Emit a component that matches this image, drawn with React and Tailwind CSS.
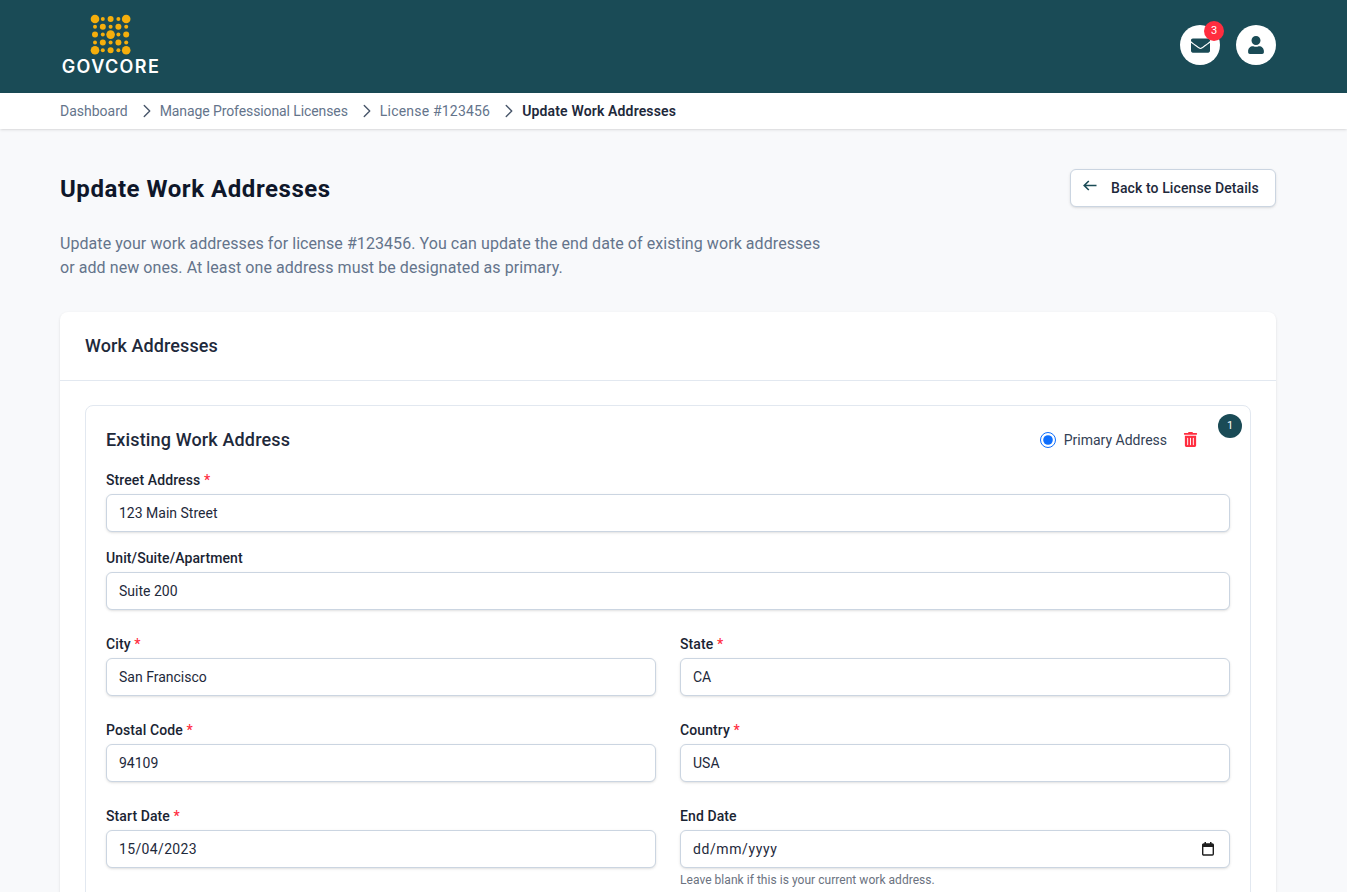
import React from 'react';
import { FaEnvelope, FaUser, FaTrashAlt } from 'react-icons/fa';
import { ChevronRight } from 'lucide-react';

const DOTS = [
  [4.3, 2, 3, 2, 4.3],
  [2, 3, 2, 3, 2],
  [3, 2, 4.3, 2, 3],
  [2, 3, 2, 3, 2],
  [4.3, 2, 3, 2, 4.3],
];

const Logo = () => (
  <div className="flex flex-col items-center w-[100px] mt-[1px]">
    <svg width="42" height="42" viewBox="0 0 42 42">
      {DOTS.map((row, r) =>
        row.map((rad, c) => (
          <circle key={`${r}-${c}`} cx={5 + c * 7.8} cy={5 + r * 7.8} r={rad} fill="#f5ae0c" />
        ))
      )}
    </svg>
    <span className="font-['Inter',sans-serif] text-white text-[18px] leading-[20px] font-semibold tracking-[1.4px] mt-[1px]">GOVCORE</span>
  </div>
);

const CalendarIcon = () => (
  <svg width="14" height="16" viewBox="0 0 14 16" className="absolute right-[15px] top-[11px] text-[#1e1e1e]">
    <rect x="1.7" y="3" width="10.6" height="11" rx="1" fill="none" stroke="currentColor" strokeWidth="1.4" />
    <rect x="1.7" y="3" width="10.6" height="3" fill="currentColor" />
    <rect x="3.5" y="1" width="1.5" height="2.5" fill="currentColor" />
    <rect x="9" y="1" width="1.5" height="2.5" fill="currentColor" />
  </svg>
);

const Field = ({ label, required, value, hint, icon, inputClass = '' }) => (
  <div>
    <label className="block text-sm leading-[21px] mb-[3px] font-medium tracking-[0.1px] text-[#1a2433]">
      {label}
      {required && <span className="text-[#ff2d3f]"> *</span>}
    </label>
    <div className="relative">
      <input
        type="text"
        defaultValue={value}
        className={`block w-full h-[38px] bg-white border border-[#cbd5e1] rounded-md px-3 text-sm text-[#1e293b] shadow-sm ${inputClass}`}
      />
      {icon}
    </div>
    {hint && <p className="text-xs leading-[16px] mt-[4px] tracking-[0.04px] text-[#6b7280]">{hint}</p>}
  </div>
);

const Crumb = ({ children }) => (
  <>
    <span>{children}</span>
    <ChevronRight size={22} strokeWidth={1.5} className="ml-[8px] mr-[2px] text-[#475569]" />
  </>
);

export default function App() {
  return (
    <div className="h-screen overflow-hidden bg-[#f8f9fb] font-['Roboto',sans-serif]">
      <header className="h-[93px] bg-[#1a4b56] flex items-center justify-between pl-[61px] pr-[71px] pb-[3px]">
        <Logo />
        <div className="flex items-center gap-4">
          <button className="relative w-10 h-10 rounded-full bg-white flex items-center justify-center text-[#1a4b56]">
            <FaEnvelope size={19} />
            <span className="absolute top-[-4px] right-[-4px] w-5 h-5 rounded-full bg-[#ff2d3f] text-white text-[11px] flex items-center justify-center">3</span>
          </button>
          <button className="w-10 h-10 rounded-full bg-white flex items-center justify-center text-[#1a4b56]">
            <FaUser size={18} />
          </button>
        </div>
      </header>

      <nav className="h-[36px] bg-white shadow-sm flex items-center px-[60px] text-sm text-[#64748b]">
        <Crumb>Dashboard</Crumb>
        <span className="flex items-center tracking-[-0.1px]">
          <Crumb>Manage Professional Licenses</Crumb>
        </span>
        <span className="flex items-center tracking-[0.2px]">
          <Crumb>License #123456</Crumb>
        </span>
        <span className="font-semibold tracking-[0.15px] text-[#1e293b]">Update Work Addresses</span>
      </nav>

      <main className="pl-[60px] pr-[71px] pt-10">
        <div className="flex items-start justify-between">
          <h1 className="text-2xl leading-[40px] font-bold tracking-[0.55px] text-[#0f172a]">Update Work Addresses</h1>
          <button className="h-[38px] w-[206px] bg-white border border-[#cbd5e1] rounded-md shadow-sm flex items-center pl-3 text-sm font-medium tracking-[0.1px] text-[#1e293b]">
            <svg width="14" height="11" viewBox="0 0 14 11" fill="none" stroke="#1a4b56" strokeWidth="1.6" className="mr-[14px] mb-[6px]">
              <path d="M1.2 5.5H13.5M5.8 1L1.2 5.5L5.8 10" />
            </svg>
            Back to License Details
          </button>
        </div>
        <p className="mt-[23px] max-w-[770px] text-base leading-6 tracking-[0.07px] text-[#64748b]">
          Update your work addresses for license #123456. You can update the end date of existing work addresses or add new ones. At least one address must be designated as primary.
        </p>

        <section className="mt-[32px] bg-white rounded-lg shadow-sm">
          <div className="h-[69px] border-b border-[#e2e8f0] flex items-center px-[25px]">
            <h2 className="text-lg font-medium tracking-[0.1px] text-[#1e293b]">Work Addresses</h2>
          </div>
          <div className="px-[25px] pt-6">
            <div className="relative border border-[#e2e8f0] rounded-lg p-5">
              <span className="absolute top-2 right-2 w-6 h-6 rounded-full bg-[#1a4b56] text-white text-[11px] flex items-center justify-center">1</span>
              <div className="flex items-center justify-between h-[27px] mb-[17px] pr-[32px]">
                <h3 className="text-lg font-medium tracking-[0.15px] text-[#1e293b]">Existing Work Address</h3>
                <div className="flex items-center">
                  <input type="radio" defaultChecked className="w-4 h-4 accent-[#0d6efd]" />
                  <span className="ml-2 text-sm text-[#334155]">Primary Address</span>
                  <FaTrashAlt size={15} className="ml-4 text-[#ff2d3f]" />
                </div>
              </div>
              <div className="flex flex-col gap-4">
                <Field label="Street Address" required value="123 Main Street" />
                <Field label="Unit/Suite/Apartment" value="Suite 200" />
                <div className="grid grid-cols-2 gap-x-6 gap-y-6 mt-2">
                  <Field label="City" required value="San Francisco" />
                  <Field label="State" required value="CA" />
                  <Field label="Postal Code" required value="94109" />
                  <Field label="Country" required value="USA" />
                  <Field label="Start Date" required value="15/04/2023" inputClass="tracking-[0.35px]" />
                  <Field
                    label="End Date"
                    value="dd/mm/yyyy"
                    inputClass="tracking-[0.6px]"
                    icon={<CalendarIcon />}
                    hint="Leave blank if this is your current work address."
                  />
                </div>
              </div>
            </div>
          </div>
        </section>
      </main>
    </div>
  );
}
